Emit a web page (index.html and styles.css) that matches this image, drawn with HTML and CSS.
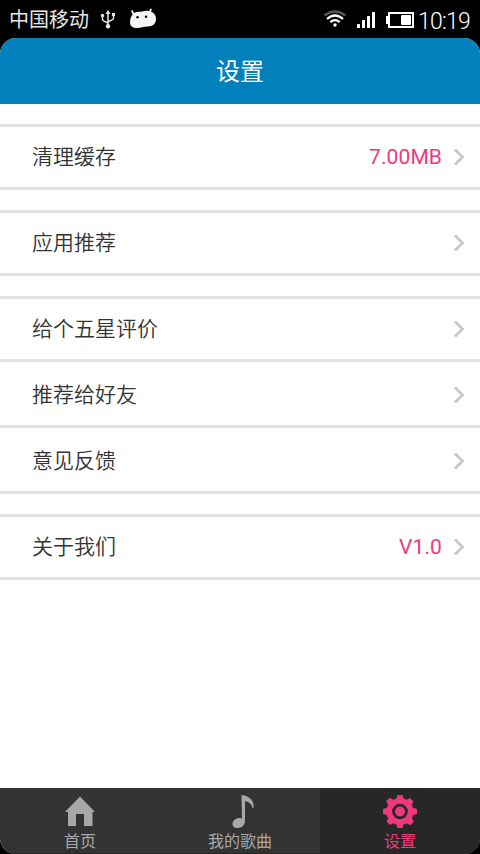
FILE: index.html
```html
<!DOCTYPE html>
<html lang="zh-CN">
<head>
<meta charset="utf-8">
<title>设置</title>
<link rel="stylesheet" href="styles.css">
</head>
<body>
<div class="status">
  <span class="carrier">中国移动</span>
  <svg class="usb" width="16" height="19" viewBox="0 0 16 19" fill="none" stroke="#e6e6e6" stroke-width="1.500">
    <path d="M8 3v12M2.500 6v3.200q0 1.300 1.500 1.900L8 13M13.500 5v3q0 1.300-1.500 1.900L8 12"/>
    <path d="M8 0l2.500 4h-5z" fill="#e6e6e6" stroke="none"/>
    <circle cx="8" cy="16.200" r="2.200" fill="#e6e6e6" stroke="none"/>
    <circle cx="2.500" cy="5.500" r="1.700" fill="#e6e6e6" stroke="none"/>
    <path d="M12 3h3v3h-3z" fill="#e6e6e6" stroke="none"/>
  </svg>
  <svg class="robot" width="28" height="21" viewBox="0 0 28 21">
    <path d="M4.500 6L3 3M20.500 4l1.500-2.500" stroke="#f4f4f4" stroke-width="1.700" stroke-linecap="round"/>
    <path d="M4 6C7 3 10 4.200 13 3.500C17 2.500 20 2.500 22.500 3.800C25.500 5.200 27 8 27 11C27 15.500 24 18.500 19 18.500C17 18.500 15.500 18.700 14 19C12 19.800 10 20 7.500 20C3 20 1 17.500 1 14.500C1 11 2 8 4 6Z" fill="#f4f4f4"/>
    <circle cx="8.500" cy="9.300" r="1.200"/><circle cx="17" cy="8.800" r="1.200"/>
  </svg>
  <svg class="wifi" width="24" height="18" viewBox="0 0 24 18" fill="none" stroke="#fff" stroke-width="2.300">
    <path d="M1.500 5.500Q12-2.500 22.500 5.500" stroke="#555"/>
    <path d="M4 9Q12 2 20 9M7.300 12.200Q12 8 16.700 12.200"/>
    <circle cx="12" cy="15" r="1.700" fill="#fff" stroke="none"/>
  </svg>
  <svg class="signal" width="18" height="16" viewBox="0 0 18 16" fill="#fff">
    <rect y="12" width="3" height="4" rx=".5"/><rect x="5" y="8" width="3" height="8" rx=".5"/><rect x="10" y="4" width="3" height="12" rx=".5"/><rect x="15" width="3" height="16" rx=".5"/>
  </svg>
  <svg class="battery" width="28" height="16" viewBox="0 0 28 16">
    <path d="M0 4h2v8H0z" fill="#fff"/><rect x="3" y="1" width="24" height="14" fill="none" stroke="#fff" stroke-width="2"/><rect x="15" y="3" width="10" height="10" rx="1" fill="#fff"/>
  </svg>
  <span class="clock">10:19</span>
</div>
<div class="app">
  <header class="header">设置</header>
  <main class="content">
    <section class="group">
      <div class="row"><span class="label">清理缓存</span><span class="value">7.00MB</span><svg class="chevron" viewBox="0 0 12 18"><path d="M2 1.500L9.500 9L2 16.500"/></svg></div>
    </section>
    <section class="group">
      <div class="row"><span class="label">应用推荐</span><svg class="chevron" viewBox="0 0 12 18"><path d="M2 1.500L9.500 9L2 16.500"/></svg></div>
    </section>
    <section class="group">
      <div class="row"><span class="label">给个五星评价</span><svg class="chevron" viewBox="0 0 12 18"><path d="M2 1.500L9.500 9L2 16.500"/></svg></div>
      <div class="row"><span class="label">推荐给好友</span><svg class="chevron" viewBox="0 0 12 18"><path d="M2 1.500L9.500 9L2 16.500"/></svg></div>
      <div class="row"><span class="label">意见反馈</span><svg class="chevron" viewBox="0 0 12 18"><path d="M2 1.500L9.500 9L2 16.500"/></svg></div>
    </section>
    <section class="group">
      <div class="row"><span class="label">关于我们</span><span class="value">V1.0</span><svg class="chevron" viewBox="0 0 12 18"><path d="M2 1.500L9.500 9L2 16.500"/></svg></div>
    </section>
  </main>
  <nav class="tabs">
    <div class="tab">
      <svg class="tab-icon" viewBox="0 0 36 36"><path d="M18 2.500L33 18H30.500V32H22V20H14V32H6V18H3Z"/></svg>
      <span>首页</span>
    </div>
    <div class="tab">
      <svg class="tab-icon" viewBox="0 0 36 36"><path d="M19.500 1C28 2 32.500 7 31.500 14H30.500C29.500 10 27 7.500 23 7V26.500C23 31 20 34 15.500 34C12 34 10.500 32 10.500 30C10.500 26.500 14 24 17.500 24Q19 24 20 24.500Z"/></svg>
      <span>我的歌曲</span>
    </div>
    <div class="tab active">
      <svg class="tab-icon" viewBox="0 0 36 36">
        <circle cx="18" cy="17.500" r="10.700" fill="none" stroke="#f0387e" stroke-width="5.800"/>
        <circle cx="18" cy="17.500" r="5"/>
        <g id="teeth"><path d="M14 6L15.500 1h5L22 6zM14 29L15.500 34h5L22 29z"/><path d="M6.500 13.500L1 15v5l5.500 1.500zM29.500 13.500L35 15v5l-5.500 1.500z"/></g>
        <use href="#teeth" transform="rotate(45 18 17.500)"/>
      </svg>
      <span>设置</span>
    </div>
  </nav>
</div>
</body>
</html>
```
FILE: styles.css
```css
* { box-sizing: border-box; }
body {
  margin: 0;
  height: 854px;
  display: flex;
  flex-direction: column;
  background: #000;
  font-family: Roboto, "Noto Sans CJK SC", sans-serif;
  overflow: hidden;
}
svg { display: block; flex: none; }
.status {
  height: 38px;
  flex: none;
  display: flex;
  align-items: center;
  padding: 0 9px 0 9px;
  color: #e6e6e6;
}
.carrier { width: 80px; padding-top: 2px; font-size: 20px; line-height: 38px; white-space: nowrap; }
.usb { margin-left: 11px; }
.robot { margin: 0 0 1px 13px; }
.wifi { margin-left: auto; }
.signal { margin: 2px 0 0 10px; }
.battery { margin: 2px 0 0 11px; }
.clock {
  width: 53px;
  margin: 4px 0 0 4px;
  font-size: 23px;
  font-weight: 300;
  letter-spacing: -.8px;
  white-space: nowrap;
  color: #fff;
}
.app {
  flex: 1;
  display: flex;
  flex-direction: column;
  border-radius: 16px;
  overflow: hidden;
  background: #fff;
}
.header {
  height: 66px;
  flex: none;
  background: #0280bb;
  color: #fff;
  font-size: 24px;
  line-height: 68px;
  text-align: center;
}
.content {
  flex: 1;
  display: flex;
  flex-direction: column;
  gap: 20px;
  padding-top: 20px;
}
.group { box-shadow: inset 0 3px #e3e3e3; }
.row {
  height: 66px;
  display: flex;
  align-items: center;
  padding: 0 15px 0 32px;
  box-shadow: inset 0 -3px #e3e3e3;
  font-size: 21px;
  line-height: 30px;
}
.label { flex: 1; font-weight: 350; color: #333; }
.value { margin-right: 11px; color: #f0387e; letter-spacing: .1px; }
.chevron {
  width: 12px;
  height: 18px;
  fill: none;
  stroke: #c8c8c8;
  stroke-width: 2.8;
}
.tabs { height: 66px; flex: none; display: flex; background: #333; }
.tab {
  flex: 1;
  display: flex;
  flex-direction: column;
  align-items: center;
  padding-top: 6px;
  color: #a8a8a8;
  font-size: 16px;
  line-height: 23px;
  box-shadow: inset 0 -1px #262626;
}
.tab-icon { width: 36px; height: 36px; fill: currentColor; }
.active { background: #272727; color: #f0387e; }
```
